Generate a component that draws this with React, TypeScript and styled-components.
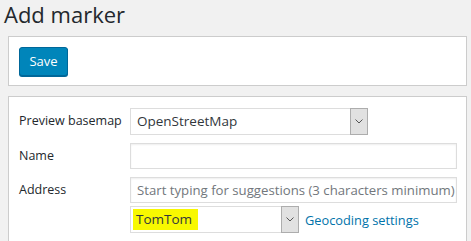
import React from 'react';
import styled, { createGlobalStyle } from 'styled-components';

const GlobalStyle = createGlobalStyle`
  html, body {
    margin: 0;
    padding: 0;
    background: #f1f1f1;
  }
  body {
    font-family: "Open Sans", "Noto Sans", sans-serif;
    color: #23282d;
  }
`;

const Page = styled.div`
  width: 459px;
  padding: 0 0 0 8px;
`;

const Title = styled.h1`
  margin: 0 0 0 -4px;
  height: 36px;
  font-size: 22px;
  font-weight: 400;
  line-height: 28px;
  color: #23282d;
`;

const Panel = styled.div<{ $gap?: number }>`
  background: #fff;
  border: 1px solid #ccc;
  margin-bottom: ${p => p.$gap ?? 0}px;
`;

const SavePanel = styled(Panel)`
  height: 50px;
  padding: 10px 0 0 10px;
  box-sizing: border-box;
`;

const SaveButton = styled.button`
  width: 49px;
  height: 29px;
  background: #0085ba;
  border: 1px solid #006799;
  border-radius: 3px;
  color: #fff;
  font-family: inherit;
  font-size: 13px;
  padding: 0 0 2px;
  box-shadow: 0 1px 0 #006799;
`;

const FormPanel = styled(Panel)`
  padding: 11px 9px 30px 10px;
  display: grid;
  grid-template-columns: 111px minmax(0, 1fr);
  row-gap: 8px;
  align-items: start;
`;

const Label = styled.div`
  font-size: 12.5px;
  color: #23282d;
  line-height: 20px;
  padding-top: 3px;
`;

const Field = styled.div`
  display: flex;
  flex-direction: column;
  gap: 3px;
  min-width: 0;
`;

const Input = styled.div<{ $h?: number }>`
  height: ${p => p.$h ?? 26}px;
  box-sizing: border-box;
  border: 1px solid #ddd;
  box-shadow: inset 0 1px 2px rgba(0, 0, 0, 0.07);
  font-size: 13.2px;
  line-height: 24px;
  padding: 0 6px;
  color: #32373c;
  white-space: nowrap;
  overflow: hidden;
`;

const Placeholder = styled.span`
  color: #72777c;
`;

const Select = styled.div<{ $w: number }>`
  width: ${p => p.$w}px;
  height: 27px;
  box-sizing: border-box;
  border: 1px solid #ddd;
  display: flex;
  font-size: 13.5px;
  color: #32373c;
`;

const SelectText = styled.div`
  flex: 1;
  padding: 0 6px;
  line-height: 25px;
  white-space: nowrap;
`;

const ArrowBox = styled.div`
  width: 16px;
  margin: -1px -1px -1px 0;
  background: #e1e1e1;
  border: 1px solid #adadad;
  display: flex;
  align-items: center;
  justify-content: center;
`;

const Highlight = styled.span`
  background: #f8f800;
  padding: 1px 6px 2px 3px;
  margin-left: -4px;
`;

const InlineRow = styled.div`
  display: flex;
  align-items: center;
  gap: 6px;
`;

const Link = styled.a`
  color: #0073aa;
  font-size: 12.8px;
  text-decoration: none;
`;

const Chevron = () => (
  <svg width="8" height="5" viewBox="0 0 8 5">
    <path d="M0.5 0.5 L4 4 L7.5 0.5" fill="none" stroke="#555" strokeWidth="1" />
  </svg>
);

const App = () => (
  <>
    <GlobalStyle />
    <Page>
      <Title>Add marker</Title>
      <SavePanel $gap={10}>
        <SaveButton>Save</SaveButton>
      </SavePanel>
      <FormPanel>
        <Label>Preview basemap</Label>
        <Select $w={238}>
          <SelectText>OpenStreetMap</SelectText>
          <ArrowBox><Chevron /></ArrowBox>
        </Select>
        <Label>Name</Label>
        <Input />
        <Label>Address</Label>
        <Field>
          <Input>
            <Placeholder>Start typing for suggestions (3 characters minimum)</Placeholder>
          </Input>
          <InlineRow>
            <Select $w={169}>
              <SelectText><Highlight>TomTom</Highlight></SelectText>
              <ArrowBox><Chevron /></ArrowBox>
            </Select>
            <Link href="#">Geocoding settings</Link>
          </InlineRow>
        </Field>
      </FormPanel>
    </Page>
  </>
);

export default App;
